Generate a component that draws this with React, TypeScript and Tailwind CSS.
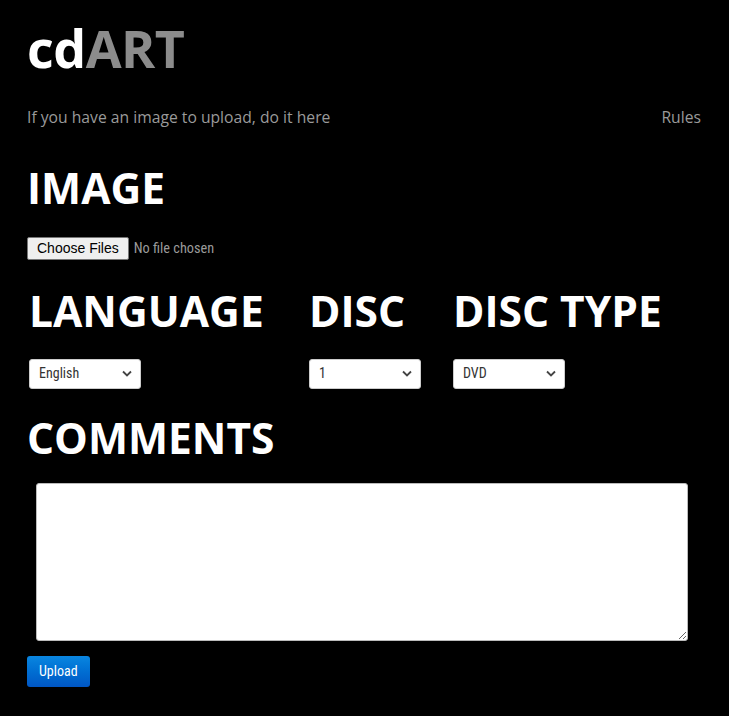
import React from "react";

const heading = "font-['Open_Sans',sans-serif] font-bold text-white leading-none";
const narrow = "font-['Liberation_Sans_Narrow','Roboto_Condensed','Liberation_Sans',sans-serif]";

function Chevron() {
  return (
    <svg width="10" height="7" viewBox="0 0 10 7" className="shrink-0">
      <path d="M1 1.5 L5 5.5 L9 1.5" fill="none" stroke="#444" strokeWidth="1.8" />
    </svg>
  );
}

function Select({ value }: { value: string }) {
  return (
    <div
      className={`flex h-[30px] w-[112px] items-center justify-between rounded-[3px] border border-[#ccc] bg-white pl-[9px] pr-[8px] text-[14px] text-[#333] ${narrow}`}
    >
      <span>{value}</span>
      <Chevron />
    </div>
  );
}

export default function App() {
  return (
    <div className="min-h-[716px] w-full bg-black px-[27px] pt-[22px]">
      <h1 className={`${heading} text-[52px] tracking-[-0.5px]`}>
        cd<span className="text-[#8c8c8c]">ART</span>
      </h1>

      <div className="mt-[32px] flex items-center justify-between font-['Open_Sans',sans-serif] text-[15.7px] text-[#9a9a9a]">
        <span>If you have an image to upload, do it here</span>
        <span className="mr-[1px]">Rules</span>
      </div>

      <h2 className={`${heading} mt-[37px] text-[42.5px]`}>IMAGE</h2>

      <div className="mt-[28px] flex items-center gap-[5px]">
        <button className="h-[23px] rounded-[2px] border border-[#767676] bg-[#efefef] px-[9px] font-['Liberation_Sans',sans-serif] text-[14px] text-black">
          Choose Files
        </button>
        <span className={`${narrow} text-[14.3px] text-[#9a9a9a]`}>No file chosen</span>
      </div>

      <div className="mt-[30px] flex pl-[2px]">
        <div className="w-[280px]">
          <h2 className={`${heading} text-[42.5px]`}>LANGUAGE</h2>
          <div className="mt-[26px]">
            <Select value="English" />
          </div>
        </div>
        <div className="w-[144px]">
          <h2 className={`${heading} text-[42.5px]`}>DISC</h2>
          <div className="mt-[26px]">
            <Select value="1" />
          </div>
        </div>
        <div>
          <h2 className={`${heading} text-[42.5px]`}>DISC TYPE</h2>
          <div className="mt-[26px]">
            <Select value="DVD" />
          </div>
        </div>
      </div>

      <h2 className={`${heading} mt-[28px] text-[42.5px]`}>COMMENTS</h2>

      <div className="mt-[24px] pl-[9px] pr-[14px]">
        <textarea className="block h-[158px] w-full resize-y rounded-[3px] border border-[#bbb] bg-white" />
      </div>

      <button
        className={`mt-[15px] h-[31px] rounded-[3px] bg-gradient-to-b from-[#0a86e0] to-[#0056c4] px-[12px] text-[14px] text-white ${narrow}`}
      >
        Upload
      </button>
    </div>
  );
}
